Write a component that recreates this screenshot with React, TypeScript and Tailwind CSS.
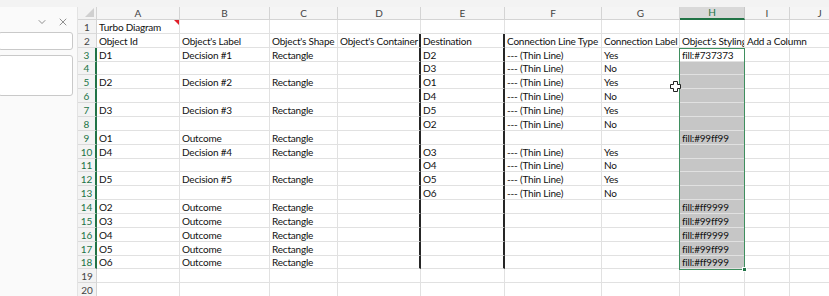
import { ChevronDown, X } from 'lucide-react';

const cols = [
  { key: 'A', w: 'w-[83px]' },
  { key: 'B', w: 'w-[90px]' },
  { key: 'C', w: 'w-[68px]' },
  { key: 'D', w: 'w-[83px]' },
  { key: 'E', w: 'w-[84px]' },
  { key: 'F', w: 'w-[97px]' },
  { key: 'G', w: 'w-[78px]' },
  { key: 'H', w: 'w-[65px]' },
  { key: 'I', w: 'w-[45px]' },
  { key: 'J', w: 'w-[60px]' },
];

const thin = '--- (Thin Line)';

// one array per row, A..J
const rows: string[][] = [
  ['Turbo Diagram'],
  ['Object Id', "Object's Label", "Object's Shape", "Object's Container", 'Destination', 'Connection Line Type', 'Connection Label', "Object's Styling", 'Add a Column'],
  ['D1', 'Decision #1', 'Rectangle', '', 'D2', thin, 'Yes', 'fill:#737373'],
  ['', '', '', '', 'D3', thin, 'No'],
  ['D2', 'Decision #2', 'Rectangle', '', 'O1', thin, 'Yes'],
  ['', '', '', '', 'D4', thin, 'No'],
  ['D3', 'Decision #3', 'Rectangle', '', 'D5', thin, 'Yes'],
  ['', '', '', '', 'O2', thin, 'No'],
  ['O1', 'Outcome', 'Rectangle', '', '', '', '', 'fill:#99ff99'],
  ['D4', 'Decision #4', 'Rectangle', '', 'O3', thin, 'Yes'],
  ['', '', '', '', 'O4', thin, 'No'],
  ['D5', 'Decision #5', 'Rectangle', '', 'O5', thin, 'Yes'],
  ['', '', '', '', 'O6', thin, 'No'],
  ['O2', 'Outcome', 'Rectangle', '', '', '', '', 'fill:#ff9999'],
  ['O3', 'Outcome', 'Rectangle', '', '', '', '', 'fill:#99ff99'],
  ['O4', 'Outcome', 'Rectangle', '', '', '', '', 'fill:#ff9999'],
  ['O5', 'Outcome', 'Rectangle', '', '', '', '', 'fill:#99ff99'],
  ['O6', 'Outcome', 'Rectangle', '', '', '', '', 'fill:#ff9999'],
  [],
  [],
];

function Cell({ row, ci, text }: { row: number; ci: number; text: string }) {
  const col = cols[ci];
  const inSel = col.key === 'H' && row >= 3 && row <= 18;
  const thick = col.key === 'D' || col.key === 'E';
  const thickRow = row >= 2 && row <= 18;

  let cls = `relative flex h-full shrink-0 items-end whitespace-nowrap pl-[2px] tracking-[-0.2px] ${col.w} `;
  cls += thick && thickRow ? 'border-r-2 border-r-[#262626] ' : 'border-r border-r-[#e1e1e1] ';
  cls += 'border-b border-b-[#e1e1e1] ';
  if (inSel) cls += row === 3 ? 'bg-white ' : 'bg-[#c6c6c6] ';
  cls += col.key === 'I' && row === 2 ? 'overflow-visible z-10 ' : 'overflow-hidden ';

  return (
    <div className={cls}>
      <span className="leading-[12px]">{text}</span>
      {row === 1 && col.key === 'A' && (
        <span className="absolute right-0 top-0 h-0 w-0 border-l-[5px] border-t-[5px] border-l-transparent border-t-[#e0202a]" />
      )}
    </div>
  );
}

export default function App() {
  return (
    <div
      className="flex h-[296px] w-[829px] flex-col overflow-hidden bg-white text-[10px] text-[#111]"
      style={{ fontFamily: 'Lato, "Liberation Sans", sans-serif' }}
    >
      <div className="h-[7px] shrink-0 bg-[#f3f3f3]" />
      <div className="flex min-h-0 flex-1">
        {/* side pane */}
        <div className="flex w-[78px] shrink-0 flex-col border-r border-[#e3e3e3] bg-[#fafafa]">
          <div className="flex h-[25px] items-center justify-end gap-[9px] pr-[8px] pt-[4px] text-[#555]">
            <ChevronDown size={12} strokeWidth={1.3} />
            <X size={12} strokeWidth={1.3} />
          </div>
          <div className="ml-[-2px] mr-[4px] h-[18px] rounded-[3px] border border-[#c9c9c9] bg-white" />
          <div className="ml-[-2px] mr-[4px] mt-[5px] h-[41px] rounded-[3px] border border-[#c9c9c9] bg-white" />
        </div>

        {/* grid */}
        <div className="relative flex min-w-0 flex-1 flex-col">
          {/* column letters */}
          <div className="flex h-[13px] shrink-0 text-[10px] text-[#444]">
            <div className="relative h-full w-[19px] shrink-0 border-b border-r border-[#d4d4d4] bg-[#f3f3f3]">
              <span className="absolute bottom-[2px] right-[2px] h-0 w-0 border-b-[9px] border-l-[9px] border-b-[#d0d0d0] border-l-transparent" />
            </div>
            {cols.map((c) => (
              <div
                key={c.key}
                className={`flex h-full shrink-0 items-center justify-center border-r ${c.w} ${
                  c.key === 'H'
                    ? 'border-b-2 border-b-[#217346] border-r-[#c8c8c8] bg-[#d9d9d9] text-[#217346]'
                    : 'border-b border-[#d4d4d4] bg-[#f5f5f5]'
                }`}
              >
                {c.key}
              </div>
            ))}
          </div>

          {rows.map((r, i) => {
            const n = i + 1;
            const hl = n >= 3 && n <= 18;
            return (
              <div key={n} className="flex h-[13.87px] shrink-0">
                <div
                  className={`flex h-full w-[19px] shrink-0 items-end justify-center border-b border-[#dadada] bg-[#f3f3f3] text-[10px] leading-[12px] ${
                    hl ? 'border-r-2 border-r-[#217346] text-[#217346]' : 'border-r border-r-[#d4d4d4] text-[#444]'
                  }`}
                >
                  {n}
                </div>
                {cols.map((c, ci) => (
                  <Cell key={c.key} row={n} ci={ci} text={r[ci] ?? ''} />
                ))}
              </div>
            );
          })}

          {/* selection outline H3:H18 */}
          <div className="pointer-events-none absolute left-[601px] top-[40.7px] h-[222px] w-[66px] border border-[#3f8f5f]">
            <span className="absolute -bottom-[3px] -right-[3px] h-[5px] w-[5px] border border-white bg-[#217346]" />
          </div>

          {/* mouse pointer */}
          <svg className="pointer-events-none absolute left-[592px] top-[74px]" width="11" height="11" viewBox="0 0 11 11">
            <path d="M3.5 0.5h4v3h3v4h-3v3h-4v-3h-3v-4h3z" fill="#fff" stroke="#222" strokeWidth="1" />
          </svg>
        </div>
      </div>
    </div>
  );
}
